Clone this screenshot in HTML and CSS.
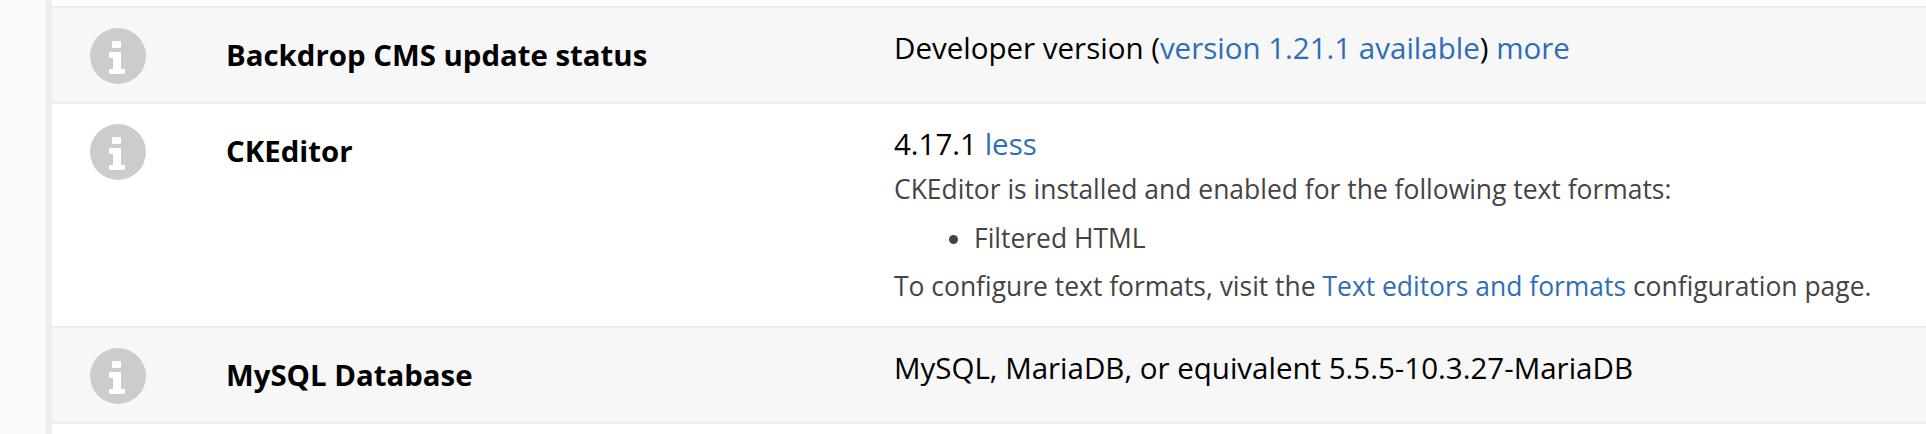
FILE: index.html
```html
<!DOCTYPE html>
<html lang="en">
<head>
  <meta charset="UTF-8" />
  <title>Status report</title>
  <link rel="stylesheet" href="styles.css">
</head>
<body>
  <div class="report">
    <div class="row row-odd">
      <div class="icon-cell">
        <svg class="info-icon" viewBox="0 0 56 56"><circle cx="28" cy="28" r="28" fill="#ccc"/><path d="M22 14q0-1 1-1h7q1 0 1 1v5q0 1-1 1h-7q-1 0-1-1zM19 25q0-1 1-1h11v17h4v4q0 1-1 1H20q-1 0-1-1v-4h4v-11h-4z" fill="#fff"/></svg>
      </div>
      <div class="title-cell">Backdrop CMS update status</div>
      <div class="value-cell">
        <div class="value">Developer version (<a href="#">version 1.21.1 available</a>) <a href="#">more</a></div>
      </div>
    </div>
    <div class="row">
      <div class="icon-cell">
        <svg class="info-icon" viewBox="0 0 56 56"><circle cx="28" cy="28" r="28" fill="#ccc"/><path d="M22 14q0-1 1-1h7q1 0 1 1v5q0 1-1 1h-7q-1 0-1-1zM19 25q0-1 1-1h11v17h4v4q0 1-1 1H20q-1 0-1-1v-4h4v-11h-4z" fill="#fff"/></svg>
      </div>
      <div class="title-cell">CKEditor</div>
      <div class="value-cell">
        <div class="value">4.17.1 <a href="#">less</a></div>
        <div class="description">
          <p>CKEditor is installed and enabled for the following text formats:</p>
          <ul>
            <li>Filtered HTML</li>
          </ul>
          <p>To configure text formats, visit the <a href="#">Text editors and formats</a> configuration page.</p>
        </div>
      </div>
    </div>
    <div class="row row-odd">
      <div class="icon-cell">
        <svg class="info-icon" viewBox="0 0 56 56"><circle cx="28" cy="28" r="28" fill="#ccc"/><path d="M22 14q0-1 1-1h7q1 0 1 1v5q0 1-1 1h-7q-1 0-1-1zM19 25q0-1 1-1h11v17h4v4q0 1-1 1H20q-1 0-1-1v-4h4v-11h-4z" fill="#fff"/></svg>
      </div>
      <div class="title-cell">MySQL Database</div>
      <div class="value-cell">
        <div class="value">MySQL, MariaDB, or equivalent 5.5.5-10.3.27-MariaDB</div>
      </div>
    </div>
  </div>
</body>
</html>
```

FILE: styles.css
```css
html, body {
  height: 100%;
}
body {
  margin: 0;
  background: #fafafa;
  color: #000;
  font-family: "Open Sans", sans-serif;
  overflow: hidden;
}
a {
  color: #2e6dbb;
  text-decoration: none;
}
.report {
  margin-left: 46px;
  border-left: 6px solid #eee;
  background: #fff;
  height: 100%;
  padding-top: 6px;
  box-sizing: border-box;
}
.row {
  display: flex;
  border-top: 2px solid #eee;
  background: #fff;
}
.row:last-child {
  border-bottom: 2px solid #eee;
}
.row-odd {
  background: #f7f7f7;
}
.icon-cell {
  width: 174px;
  padding: 20px 0 18px 38px;
  box-sizing: border-box;
}
.info-icon {
  display: block;
  width: 56px;
  height: 56px;
}
.title-cell {
  width: 668px;
  padding-top: 26px;
  font-size: 29.4px;
  line-height: 42px;
  font-weight: 700;
}
.value-cell {
  flex: 1;
  padding: 19px 0 21px;
}
.value {
  font-size: 29.5px;
  line-height: 42px;
}
.description {
  font-size: 26.45px;
  line-height: 38px;
  color: #444;
}
.description p {
  margin: 5px 0 0;
}
.description ul {
  margin: 11px 0 10px;
  padding-left: 80px;
}
```
